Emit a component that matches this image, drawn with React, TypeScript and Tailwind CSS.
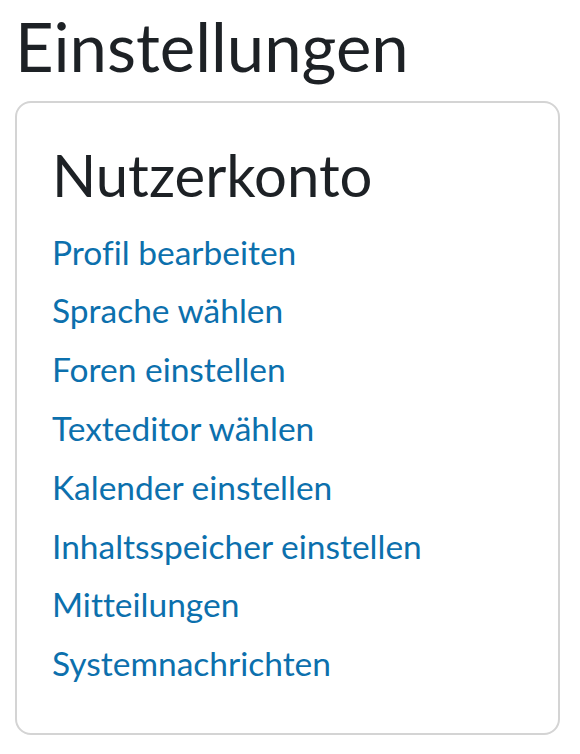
const links = [
  'Profil bearbeiten',
  'Sprache wählen',
  'Foren einstellen',
  'Texteditor wählen',
  'Kalender einstellen',
  'Inhaltsspeicher einstellen',
  'Mitteilungen',
  'Systemnachrichten',
];

export default function App() {
  return (
    <div className="min-h-screen bg-white px-[15px] pt-[12.6px] font-['Lato','Liberation_Sans',sans-serif] [font-variant-ligatures:none]">
      <h1 className="text-[67px] leading-none font-normal text-[#1d2125]">Einstellungen</h1>

      {/* Card */}
      <div className="mt-[21.4px] w-[545px] rounded-[16px] border-2 border-[#d4d4d4] pl-[35px] pr-6 pt-[42.6px] pb-[40px]">
        <h2 className="text-[58px] leading-none font-normal text-[#1d2125]">Nutzerkonto</h2>
        <ul className="mt-[19px]">
          {links.map((l) => (
            <li key={l}>
              <a href="#" className="block text-[33.5px] leading-[58.8px] text-[#0c70ad]">
                {l}
              </a>
            </li>
          ))}
        </ul>
      </div>
    </div>
  );
}
